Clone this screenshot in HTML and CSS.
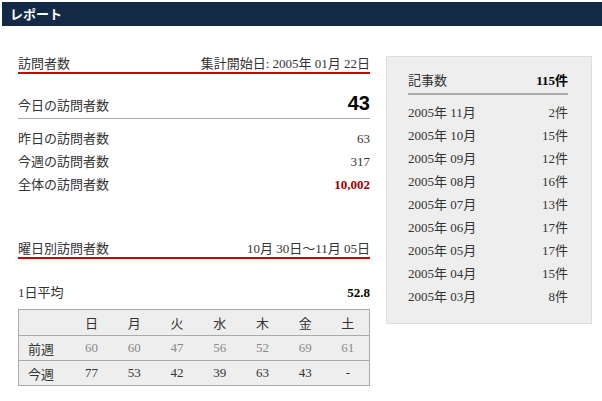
FILE: index.html
```html
<!DOCTYPE html>
<html lang="ja">
<head>
    <meta charset="UTF-8">
    <meta name="viewport" content="width=device-width, initial-scale=1.0">
    <title>レポート</title>
    <link rel="stylesheet" href="styles.css">
</head>
<body>

    <h1 class="title-bar">レポート</h1>

    <div class="content">
        <div class="main">
            <div class="section-head">
                <span>訪問者数</span>
                <span>集計開始日: 2005年 01月 22日</span>
            </div>

            <div class="today">
                <span>今日の訪問者数</span>
                <span class="big">43</span>
            </div>

            <div class="row"><span>昨日の訪問者数</span><span>63</span></div>
            <div class="row"><span>今週の訪問者数</span><span>317</span></div>
            <div class="row"><span>全体の訪問者数</span><span class="total">10,002</span></div>

            <div class="section-head second">
                <span>曜日別訪問者数</span>
                <span>10月 30日～11月 05日</span>
            </div>

            <div class="row average"><span>1日平均</span><span class="strong">52.8</span></div>

            <table class="week">
                <tr>
                    <th class="label"></th>
                    <th>日</th><th>月</th><th>火</th><th>水</th><th>木</th><th>金</th><th>土</th>
                </tr>
                <tr class="last-week">
                    <td class="label">前週</td>
                    <td>60</td><td>60</td><td>47</td><td>56</td><td>52</td><td>69</td><td>61</td>
                </tr>
                <tr>
                    <td class="label">今週</td>
                    <td>77</td><td>53</td><td>42</td><td>39</td><td>63</td><td>43</td><td>-</td>
                </tr>
            </table>
        </div>

        <div class="side">
            <div class="side-head">
                <span>記事数</span>
                <span class="strong">115件</span>
            </div>
            <div class="row"><span>2005年 11月</span><span>2件</span></div>
            <div class="row"><span>2005年 10月</span><span>15件</span></div>
            <div class="row"><span>2005年 09月</span><span>12件</span></div>
            <div class="row"><span>2005年 08月</span><span>16件</span></div>
            <div class="row"><span>2005年 07月</span><span>13件</span></div>
            <div class="row"><span>2005年 06月</span><span>17件</span></div>
            <div class="row"><span>2005年 05月</span><span>17件</span></div>
            <div class="row"><span>2005年 04月</span><span>15件</span></div>
            <div class="row"><span>2005年 03月</span><span>8件</span></div>
        </div>
    </div>

</body>
</html>
```

FILE: styles.css
```css
body {
    margin: 0;
    padding: 2px 0 0 2px;
    font-family: "Liberation Serif", "Noto Sans CJK JP", serif;
    font-size: 13px;
    color: #333;
}

.title-bar {
    margin: 0;
    height: 24px;
    line-height: 24px;
    padding-left: 8px;
    background-color: #122a45;
    color: #fff;
    font-family: "Noto Sans CJK JP", sans-serif;
    font-size: 13px;
    font-weight: bold;
}

.content {
    display: flex;
    align-items: flex-start;
    gap: 16px;
    padding: 30px 0 0 16px;
}

.main {
    width: 352px;
}

.section-head {
    display: flex;
    justify-content: space-between;
    line-height: 16px;
    border-bottom: 2px solid #cc0000;
}

.section-head.second {
    margin-top: 45px;
}

.today {
    display: flex;
    justify-content: space-between;
    align-items: baseline;
    margin-top: 20px;
    line-height: 19px;
    padding-bottom: 3px;
    border-bottom: 1px solid #aaa;
}

.big {
    font-family: "Liberation Sans", Arial, sans-serif;
    font-size: 20px;
    font-weight: bold;
    color: #000;
}

.row {
    display: flex;
    justify-content: space-between;
    line-height: 23px;
}

.today + .row {
    margin-top: 8px;
}

.total {
    font-weight: bold;
    color: #990000;
}

.strong {
    font-weight: bold;
    color: #000;
}

.average {
    margin-top: 22px;
}

.week {
    width: 100%;
    margin-top: 5px;
    border-collapse: collapse;
    table-layout: fixed;
    background-color: #eee;
    border: 1px solid #aaa;
}

.week th,
.week td {
    padding: 0;
    text-align: center;
    font-weight: normal;
}

.week th {
    height: 25px;
}

.week td {
    height: 24px;
    border-top: 1px solid #aaa;
}

.week .label {
    width: 42px;
    text-align: left;
    padding-left: 9px;
}

.last-week td {
    color: #888;
}

.last-week td.label {
    color: #333;
}

.side {
    width: 160px;
    padding: 16px 23px 15px 21px;
    background-color: #eee;
    border: 1px solid #ddd;
}

.side-head {
    display: flex;
    justify-content: space-between;
    line-height: 16px;
    padding-bottom: 4px;
    border-bottom: 2px solid #aaa;
    margin-bottom: 6px;
}
```
